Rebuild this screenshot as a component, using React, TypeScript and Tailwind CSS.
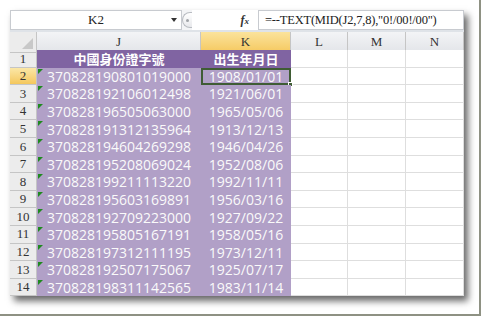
import React from 'react';

const rows: [string, string][] = [
  ['370828190801019000', '1908/01/01'],
  ['370828192106012498', '1921/06/01'],
  ['370828196505063000', '1965/05/06'],
  ['370828191312135964', '1913/12/13'],
  ['370828194604269298', '1946/04/26'],
  ['370828195208069024', '1952/08/06'],
  ['370828199211113220', '1992/11/11'],
  ['370828195603169891', '1956/03/16'],
  ['370828192709223000', '1927/09/22'],
  ['370828195805167191', '1958/05/16'],
  ['370828197312111195', '1973/12/11'],
  ['370828192507175067', '1925/07/17'],
  ['370828198311142565', '1983/11/14'],
];

const serif = "font-['Liberation_Serif','Noto_Sans_CJK_TC',serif]";
const cjk = "font-['Noto_Sans_CJK_TC','Noto_Sans_CJK_SC',sans-serif]";
const num = "font-['Open_Sans',sans-serif]";

const gridCols = 'grid grid-cols-[27px_164px_90px_57px_58px_58px]';

const RowNum: React.FC<{ n: number; active?: boolean }> = ({ n, active }) => (
  <div
    className={`h-[17.6px] flex items-center justify-center border-r border-b border-[#c5c5c5] text-[13px] text-[#333] ${serif} ${
      active ? 'bg-gradient-to-b from-[#fbe7a6] to-[#f4c75b]' : 'bg-[#ececec]'
    }`}
  >
    {n}
  </div>
);

const Empty: React.FC = () => (
  <div className="h-[17.6px] border-r border-b border-[#dedede] bg-white" />
);

export default function App() {
  return (
    <div className="w-[484px] h-[318px] bg-white overflow-hidden">
      <div className="w-[481px] h-[316px] border-r-2 border-b-2 border-[#8e9183] pt-[10px] pl-[10px]">
        <div className="w-[454px] bg-[#e9ebee] shadow-[4px_5px_7px_rgba(0,0,0,0.6)]">
          {/* formula bar */}
          <div className="h-[20px] flex bg-[#f3f4f6]">
            <div className="w-[172px] bg-white border border-[#c8cbd0] flex items-center relative">
              <span className={`flex-1 text-center text-[13px] text-[#222] ${serif}`}>K2</span>
              <span className="absolute right-[4px] top-[7px] w-0 h-0 border-l-[3px] border-r-[3px] border-t-[4px] border-l-transparent border-r-transparent border-t-[#333]" />
            </div>
            <div className="w-[10px] flex items-center justify-center">
              <div className="w-[10px] h-[16px] rounded-l-full border border-r-0 border-[#b9bcc2] bg-gradient-to-b from-white to-[#e8e9ec] flex items-center justify-center">
                <div className="w-[3px] h-[3px] rounded-full bg-[#a0a3a8]" />
              </div>
            </div>
            <div className="w-[66px] flex items-center justify-end pr-[9px] bg-white">
              <span className={`text-[12px] italic font-bold text-[#333] ${serif}`}>f<span className="text-[9px]">x</span></span>
            </div>
            <div className="flex-1 bg-white border border-[#c8cbd0] flex items-center pl-[6px]">
              <span className={`text-[12.5px] text-[#222] ${serif} tracking-[-0.2px]`}>=--TEXT(MID(J2,7,8),"0!/00!/00")</span>
            </div>
          </div>
          <div className="h-[2px] bg-[#dfe3e8]" />
          {/* column headers */}
          <div className={`${gridCols} h-[18px]`}>
            <div className="bg-[#ececec] border-r border-b border-[#c5c5c5] relative">
              <div className="absolute right-[3px] bottom-[3px] w-0 h-0 border-b-[11px] border-l-[11px] border-b-[#c8c8c8] border-l-transparent" />
            </div>
            {['J', 'K', 'L', 'M', 'N'].map((c) => (
              <div
                key={c}
                className={`flex items-center justify-center border-r border-b border-[#c5c5c5] text-[13px] text-[#333] ${serif} ${
                  c === 'K' ? 'bg-gradient-to-b from-[#fbe39b] to-[#f5c95f]' : 'bg-gradient-to-b from-[#f3f4f6] to-[#e3e5e9]'
                }`}
              >
                {c}
              </div>
            ))}
          </div>
          {/* row 1 */}
          <div className={gridCols}>
            <RowNum n={1} />
            <div className={`h-[17.6px] bg-[#8064a2] text-white font-bold text-[13px] flex items-center justify-center ${cjk}`}>
              中國身份證字號
            </div>
            <div className={`h-[17.6px] bg-[#8064a2] text-white font-bold text-[13px] flex items-center justify-center ${cjk}`}>
              出生年月日
            </div>
            <Empty />
            <Empty />
            <Empty />
          </div>
          {rows.map(([id, date], i) => (
            <div key={id} className={gridCols}>
              <RowNum n={i + 2} active={i === 0} />
              <div className={`h-[17.6px] bg-[#b1a0c7] text-[#fafafa] text-[14px] flex items-center justify-center relative ${num}`}>
                <span className="absolute left-[1px] top-[1px] w-0 h-0 border-t-[5px] border-r-[5px] border-t-[#1f8a1f] border-r-transparent" />
                {id}
              </div>
              <div
                className={`h-[17.6px] bg-[#b1a0c7] text-[#fafafa] text-[14px] flex items-center justify-center relative ${num} ${
                  i === 0 ? 'border-2 border-[#3f5c34]' : ''
                }`}
              >
                {date}
                {i === 0 && (
                  <span className="absolute right-[-4px] bottom-[-4px] w-[5px] h-[5px] bg-[#3f5c34] border border-white" />
                )}
              </div>
              <Empty />
              <Empty />
              <Empty />
            </div>
          ))}
        </div>
      </div>
    </div>
  );
}
